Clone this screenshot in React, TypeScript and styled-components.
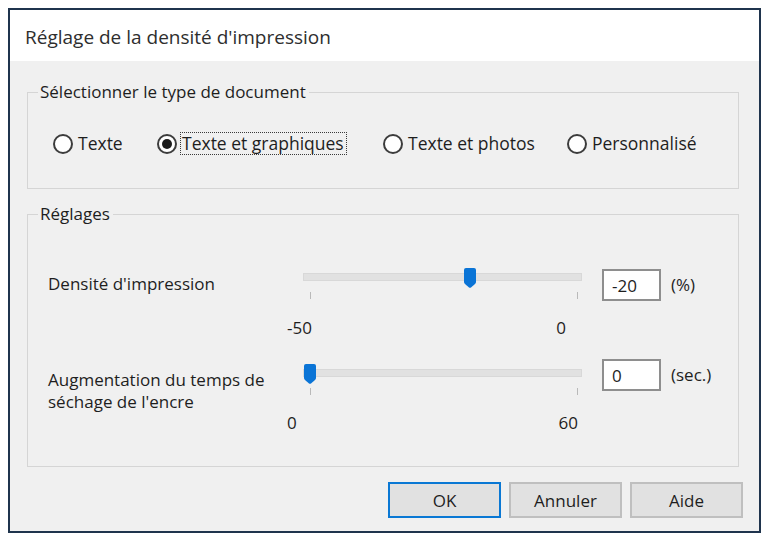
import styled, { createGlobalStyle } from 'styled-components';

const GlobalStyle = createGlobalStyle`
  html,
  body {
    margin: 0;
    padding: 0;
    background: #fff;
  }

  body {
    font-family: 'Open Sans', 'Noto Sans', sans-serif;
    color: #1e1e1e;
  }

  * {
    box-sizing: border-box;
  }
`;

const Page = styled.div`
  width: 768px;
  height: 537px;
  padding: 8px;
`;

const Dialog = styled.div`
  width: 753px;
  height: 525px;
  display: flex;
  flex-direction: column;
  border: 2px solid #1f344d;
  background: #f0f0f0;
`;

const TitleBar = styled.header`
  flex: none;
  height: 51px;
  display: flex;
  align-items: center;
  padding: 2px 0 0 15px;
  background: #fff;
  color: #2e2e2e;
  font-size: 19px;
`;

const Content = styled.div`
  flex: 1;
  display: flex;
  flex-direction: column;
  padding: 20px 20px 0 17px;
`;

const Group = styled.fieldset<{ $gap?: number }>`
  margin: ${(p) => p.$gap ?? 0}px 0 0 0;
  padding: 0;
  min-width: 0;
  border: 1px solid #d5d5d5;
`;

const Legend = styled.legend`
  margin-left: 10px;
  padding: 0 3px 0 2px;
  font-size: 17px;
  line-height: 22px;
`;

// type de document
const RadioRow = styled.div`
  display: grid;
  grid-template-columns: 104px 226px 184px auto;
  padding: 29px 0 33px 25px;
`;

const RadioItem = styled.label`
  display: flex;
  align-items: center;
  gap: 3px;
  font-size: 17.5px;
  line-height: 21px;
`;

const Circle = styled.span<{ $checked?: boolean }>`
  flex: none;
  width: 20px;
  height: 20px;
  display: flex;
  align-items: center;
  justify-content: center;
  border: 2px solid #3c3c3c;
  border-radius: 50%;
  background: #fff;

  &::after {
    content: '';
    display: ${(p) => (p.$checked ? 'block' : 'none')};
    width: 10px;
    height: 10px;
    border-radius: 50%;
    background: #1c1c1c;
  }
`;

const RadioText = styled.span<{ $focused?: boolean }>`
  padding: 0 2px 0 ${(p) => (p.$focused ? 1 : 1)}px;
  border: 1px ${(p) => (p.$focused ? 'dotted #3a3a3a' : 'solid transparent')};
`;

// réglages
const Settings = styled.div`
  display: flex;
  flex-direction: column;
  gap: 25px;
  padding: 43px 0 32px 20px;
`;

const SettingRow = styled.div`
  display: grid;
  grid-template-columns: 255px 279px auto;
  grid-template-rows: auto auto;
  row-gap: 16px;
  align-items: start;
`;

const SettingLabel = styled.div`
  grid-row: 1 / span 2;
  margin-top: 5px;
  font-size: 17px;
  line-height: 22px;
`;

const SliderBox = styled.div`
  position: relative;
  height: 32px;
`;

const Track = styled.div`
  margin-top: 5px;
  height: 8px;
  background: #e1e1e1;
  border: 1px solid #d8d8d8;
`;

const Ticks = styled.div`
  display: flex;
  justify-content: space-between;
  margin: 11px 4px 0 7px;

  span {
    width: 1px;
    height: 7px;
    background: #b9b9b9;
  }
`;

const Thumb = styled.svg`
  position: absolute;
  top: 0;
  width: 12px;
  height: 20px;
`;

const Field = styled.div<{ $shift: number }>`
  display: flex;
  align-items: center;
  margin: ${(p) => p.$shift}px 0 0 20px;
`;

const TextBox = styled.input`
  width: 59px;
  height: 32px;
  padding: 0 0 0 8px;
  border: 2px solid #8e8e8e;
  background: #fff;
  color: #1e1e1e;
  font: inherit;
  font-size: 17px;
  outline: none;
`;

const Unit = styled.span`
  margin-left: 10px;
  font-size: 17px;
  line-height: 22px;
`;

const Scale = styled.div<{ $right: number }>`
  grid-column: 2;
  grid-row: 2;
  display: flex;
  justify-content: space-between;
  margin: 0 ${(p) => p.$right}px 0 -16px;
  font-size: 17px;
  line-height: 22px;
`;

// boutons
const Buttons = styled.div`
  display: flex;
  justify-content: flex-end;
  gap: 8px;
  margin: 15px -4px 0 0;
`;

const Button = styled.button<{ $default?: boolean }>`
  width: 113px;
  height: 36px;
  padding: 0;
  border: 2px solid ${(p) => (p.$default ? '#0a78d4' : '#bfbfbf')};
  background: #e1e1e1;
  color: #1e1e1e;
  font: inherit;
  font-size: 17px;
`;

type SliderProps = { min: number; max: number; value: number };

const Slider = ({ min, max, value }: SliderProps) => {
  // ticks sit 7px in from the left and 274px in: thumb centre moves between them
  const left = 7 + ((value - min) / (max - min)) * 267 - 6;
  return (
    <SliderBox>
      <Track />
      <Ticks>
        <span />
        <span />
      </Ticks>
      <Thumb viewBox="0 0 12 20" style={{ left }}>
        <path d="M0 2 Q0 0 2 0 H10 Q12 0 12 2 V14 Q12 15 11 16 L7 19.5 Q6 20.2 5 19.5 L1 16 Q0 15 0 14 Z" fill="#0a74d6" />
      </Thumb>
    </SliderBox>
  );
};

const types = [
  { label: 'Texte', checked: false },
  { label: 'Texte et graphiques', checked: true },
  { label: 'Texte et photos', checked: false },
  { label: 'Personnalisé', checked: false },
];

const App = () => {
  return (
    <Page>
      <GlobalStyle />
      <Dialog>
        <TitleBar>Réglage de la densité d'impression</TitleBar>
        <Content>
          <Group>
            <Legend>Sélectionner le type de document</Legend>
            <RadioRow>
              {types.map((t) => (
                <RadioItem key={t.label}>
                  <Circle $checked={t.checked} />
                  <RadioText $focused={t.checked}>{t.label}</RadioText>
                </RadioItem>
              ))}
            </RadioRow>
          </Group>

          <Group $gap={14}>
            <Legend>Réglages</Legend>
            <Settings>
              <SettingRow>
                <SettingLabel>Densité d'impression</SettingLabel>
                <Slider min={-50} max={0} value={-20} />
                <Field $shift={1}>
                  <TextBox readOnly value="-20" />
                  <Unit>(%)</Unit>
                </Field>
                <Scale $right={16}>
                  <span>-50</span>
                  <span>0</span>
                </Scale>
              </SettingRow>

              <SettingRow>
                <SettingLabel>
                  Augmentation du temps de
                  <br />
                  séchage de l'encre
                </SettingLabel>
                <Slider min={0} max={60} value={0} />
                <Field $shift={-5}>
                  <TextBox readOnly value="0" />
                  <Unit>(sec.)</Unit>
                </Field>
                <Scale $right={4}>
                  <span>0</span>
                  <span>60</span>
                </Scale>
              </SettingRow>
            </Settings>
          </Group>

          <Buttons>
            <Button $default>OK</Button>
            <Button>Annuler</Button>
            <Button>Aide</Button>
          </Buttons>
        </Content>
      </Dialog>
    </Page>
  );
};

export default App;
